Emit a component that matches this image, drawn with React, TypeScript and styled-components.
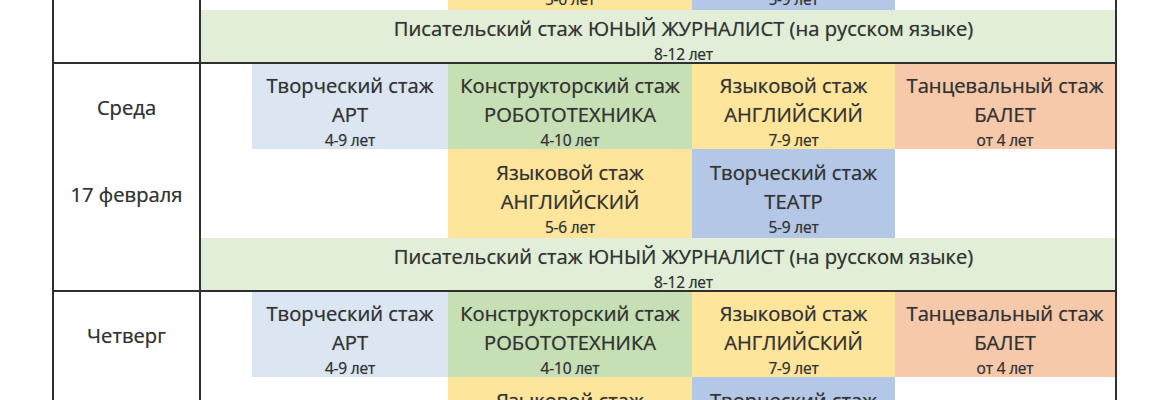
import React from "react";
import styled, { createGlobalStyle } from "styled-components";

const GlobalStyle = createGlobalStyle`
  html, body {
    margin: 0;
    padding: 0;
    background: #ffffff;
  }
  body {
    font-family: "Open Sans", "Noto Sans", "DejaVu Sans", sans-serif;
    color: #333333;
  }
`;

const Viewport = styled.div`
  width: 1170px;
  height: 400px;
  overflow: hidden;
  background: #ffffff;
`;

const Table = styled.div`
  box-sizing: border-box;
  width: 1065px;
  margin: -166px 0 0 52px;
  border-left: 2px solid #2f2f2f;
  border-right: 2px solid #2f2f2f;
`;

const DayGrid = styled.section`
  display: grid;
  grid-template-columns: 147px 51px 196px 244px 203px 1fr;
  grid-template-rows: 85px 89px 52px;
  border-top: 2px solid #2f2f2f;
`;

const DayColumn = styled.div`
  grid-column: 1;
  grid-row: 1 / -1;
  display: grid;
  grid-template-rows: 85px 89px 1fr;
  border-right: 2px solid #2f2f2f;
`;

const textLook = `
  white-space: nowrap;
  color: #333333;
  text-shadow: 0 0 0.7px rgba(40, 40, 40, 0.55);
`;

const DayLabel = styled.div`
  display: flex;
  align-items: center;
  justify-content: center;
  font-size: 20.2px;
  padding-top: 1px;
  ${textLook}
`;

const Cell = styled.div<{ $bg: string; $col: number; $row: number }>`
  grid-column: ${(p) => p.$col};
  grid-row: ${(p) => p.$row};
  background: ${(p) => p.$bg};
  display: flex;
  flex-direction: column;
  align-items: center;
  justify-content: center;
  padding-top: 8px;
  box-sizing: border-box;
  text-align: center;
`;

const Kind = styled.div`
  font-size: 20.2px;
  line-height: 28px;
  ${textLook}
`;

const Title = styled.div`
  font-size: 20.2px;
  line-height: 30px;
  ${textLook}
`;

const Age = styled.div`
  font-size: 15.5px;
  line-height: 22px;
  letter-spacing: -0.2px;
  ${textLook}
`;

const Band = styled.div`
  grid-column: 2 / -1;
  grid-row: 3;
  background: #e3eed8;
  display: flex;
  flex-direction: column;
  align-items: center;
  padding: 4px 0 0 51px;
  box-sizing: border-box;
`;

const BandTitle = styled.div`
  font-size: 20.2px;
  line-height: 28px;
  ${textLook}
`;

const BandAge = styled.div`
  font-size: 15.5px;
  line-height: 24px;
  letter-spacing: -0.2px;
  ${textLook}
`;

const COLORS = {
  lightBlue: "#dce5f2",
  blue: "#b5c7e6",
  green: "#c6dfb4",
  yellow: "#fde59c",
  salmon: "#f6c9ab",
};

type Lesson = {
  kind: string;
  title: string;
  age: string;
  bg: string;
  col: number;
  row: number;
};

const lessons: Lesson[] = [
  { kind: "Творческий стаж", title: "АРТ", age: "4-9 лет", bg: COLORS.lightBlue, col: 3, row: 1 },
  { kind: "Конструкторский стаж", title: "РОБОТОТЕХНИКА", age: "4-10 лет", bg: COLORS.green, col: 4, row: 1 },
  { kind: "Языковой стаж", title: "АНГЛИЙСКИЙ", age: "7-9 лет", bg: COLORS.yellow, col: 5, row: 1 },
  { kind: "Танцевальный стаж", title: "БАЛЕТ", age: "от 4 лет", bg: COLORS.salmon, col: 6, row: 1 },
  { kind: "Языковой стаж", title: "АНГЛИЙСКИЙ", age: "5-6 лет", bg: COLORS.yellow, col: 4, row: 2 },
  { kind: "Творческий стаж", title: "ТЕАТР", age: "5-9 лет", bg: COLORS.blue, col: 5, row: 2 },
];

const days = [
  { name: "Вторник", date: "16 февраля" },
  { name: "Среда", date: "17 февраля" },
  { name: "Четверг", date: "18 февраля" },
];

export default function App() {
  return (
    <>
      <GlobalStyle />
      <Viewport>
        <Table>
          {days.map((d) => (
            <DayGrid key={d.name}>
              <DayColumn>
                <DayLabel>{d.name}</DayLabel>
                <DayLabel>{d.date}</DayLabel>
              </DayColumn>
              {lessons.map((l, i) => (
                <Cell key={i} $bg={l.bg} $col={l.col} $row={l.row}>
                  <Kind>{l.kind}</Kind>
                  <Title>{l.title}</Title>
                  <Age>{l.age}</Age>
                </Cell>
              ))}
              <Band>
                <BandTitle>Писательский стаж ЮНЫЙ ЖУРНАЛИСТ (на русском языке)</BandTitle>
                <BandAge>8-12 лет</BandAge>
              </Band>
            </DayGrid>
          ))}
        </Table>
      </Viewport>
    </>
  );
}
